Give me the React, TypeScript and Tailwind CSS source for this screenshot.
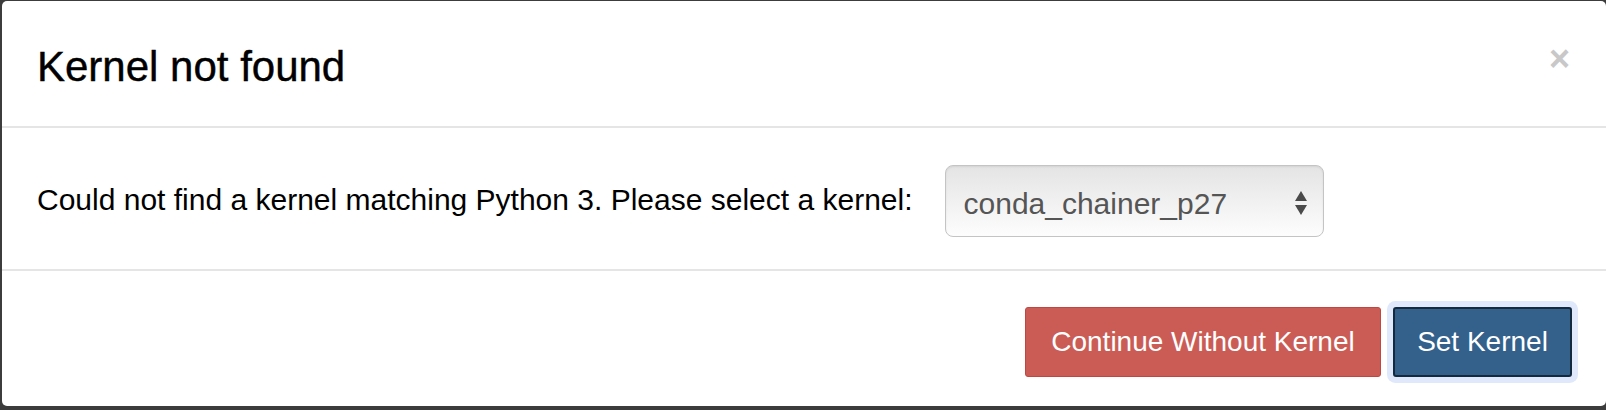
export default function App() {
  return (
    <div
      className="w-[1606px] h-[410px] bg-[#3c3c3c] pl-[2px] pt-[1px] pb-[4px] overflow-hidden"
      style={{ fontFamily: '"Liberation Sans", Arial, sans-serif' }}
    >
      <div className="h-full bg-white rounded-[5px] flex flex-col">
        {/* header */}
        <div className="h-[127px] shrink-0 border-b-2 border-[#e5e5e5] flex items-center justify-between pl-[35px] pr-[36px]">
          <h4 className="text-[42px] leading-none text-black mt-[6px] [-webkit-text-stroke:0.4px_black]">
            Kernel not found
          </h4>
          <span className="text-[36px] font-bold leading-none text-[#c8c8c8] -mt-[10px]">×</span>
        </div>

        {/* body */}
        <div className="h-[143px] shrink-0 border-b-2 border-[#e5e5e5] flex items-center gap-[32px] pl-[35px]">
          <p className="text-[30px] text-black mt-[2px]">
            Could not find a kernel matching Python 3. Please select a kernel:
          </p>
          <div className="w-[379px] h-[72px] mt-[4px] rounded-[8px] border-[1.5px] border-[#c4c4c4] bg-gradient-to-b from-[#e4e4e4] to-[#fdfdfd] shadow-[inset_0_1px_2px_rgba(0,0,0,0.08)] flex items-center justify-between pl-[18px] pr-[15px]">
            <span className="text-[30px] text-[#555] mt-[6px]">conda_chainer_p27</span>
            <svg width="14" height="26" viewBox="0 0 14 26" className="mt-[4px]">
              <path d="M7 1 L13 11 L1 11 Z" fill="#4a4a4a" />
              <path d="M1 15 L13 15 L7 25 Z" fill="#4a4a4a" />
            </svg>
          </div>
        </div>

        {/* footer */}
        <div className="flex-1 flex items-center justify-end gap-[12px] pr-[34px] pt-[6px]">
          <button className="w-[356px] h-[70px] rounded-[3px] border border-[#c2463f] bg-[#cb5c55] text-white text-[28px]">
            Continue Without Kernel
          </button>
          <button className="w-[179px] h-[70px] rounded-[3px] border-2 border-[#13293d] bg-[#33618b] text-white text-[28px] ring-[6px] ring-[#dfe9fb]">
            Set Kernel
          </button>
        </div>
      </div>
    </div>
  );
}
